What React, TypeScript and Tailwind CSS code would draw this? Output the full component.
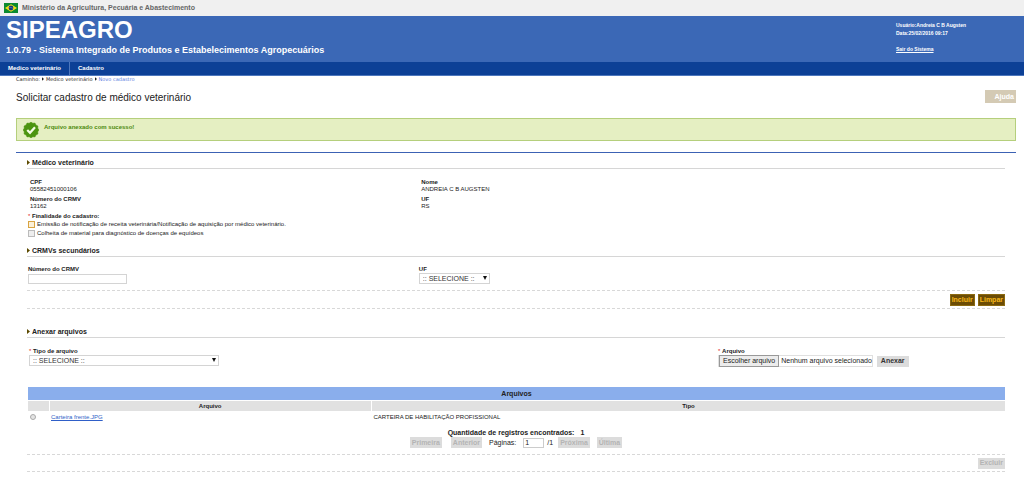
import type { ButtonHTMLAttributes, ReactNode } from "react";

function FlagIcon() {
  return (
    <svg viewBox="0 0 28 20" className="h-[10px] w-[14px] shrink-0" aria-hidden="true">
      <rect width="28" height="20" fill="#0b8a2f" />
      <path d="M14 2.5 26 10 14 17.5 2 10z" fill="#f7e017" />
      <circle cx="14" cy="10" r="4.8" fill="#163a78" />
      <path d="M9.500 9c3-.8 6.500.2 9 2.400" stroke="#9db4e0" strokeWidth="0.8" fill="none" />
    </svg>
  );
}

function SealIcon() {
  const points = Array.from({ length: 24 }, (_, i) => {
    const radius = i % 2 === 0 ? 16 : 14;
    const angle = (i * Math.PI) / 12;
    return `${16 + radius * Math.cos(angle)},${16 + radius * Math.sin(angle)}`;
  }).join(" ");
  return (
    <svg viewBox="0 0 32 32" className="size-4 shrink-0" aria-hidden="true">
      <polygon points={points} fill="#4c9410" stroke="#4c9410" strokeWidth="1" strokeLinejoin="round" />
      <path d="M8.500 16l5.500 5.500L24 10.500" stroke="#f4fbe4" strokeWidth="4.500" fill="none" />
    </svg>
  );
}

function Arrow({ className }: { className: string }) {
  return (
    <svg viewBox="0 0 3 5" className={className} aria-hidden="true">
      <path d="M0 0l3 2.500L0 5z" fill="currentColor" />
    </svg>
  );
}

function SectionTitle({ children }: { children: ReactNode }) {
  return (
    <h2 className="flex h-[12px] items-center gap-[2px] border-b border-[#d6d6d6] text-[7px] leading-[8px] font-bold text-[#222]">
      <Arrow className="h-[5px] w-[3px] text-[#5c4a00]" />
      {children}
    </h2>
  );
}

function Required() {
  return <span className="font-normal text-[#e02020]">* </span>;
}

function Field({ label, value }: { label: string; value: string }) {
  return (
    <div className="h-[17px] pl-[3px]">
      <dt className="font-bold">{label}</dt>
      <dd>{value}</dd>
    </div>
  );
}

function Dropdown({ id, className }: { id: string; className: string }) {
  return (
    <div className={`relative ${className}`}>
      <select
        id={id}
        className="block h-[11px] w-full appearance-none border border-[#d4d4d4] bg-white pl-[3px] text-[7px] leading-[8px] text-[#333]"
      >
        <option>:: SELECIONE ::</option>
      </select>
      <svg viewBox="0 0 4 4" className="pointer-events-none absolute top-[3px] right-[3px] size-[4px]" aria-hidden="true">
        <path d="M0 0h4L2 4z" fill="#111" />
      </svg>
    </div>
  );
}

function GoldButton({ children }: { children: ReactNode }) {
  return (
    <button
      type="button"
      className="h-[12px] border border-[#8c6a10] bg-[#6b4c05] px-px text-[7px] leading-[8px] font-bold text-[#f7b81c]"
    >
      {children}
    </button>
  );
}

function GrayButton({ children, ...rest }: ButtonHTMLAttributes<HTMLButtonElement>) {
  return (
    <button
      type="button"
      {...rest}
      className="h-[11px] bg-[#dcdcdc] px-[4px] text-[7px] leading-[8px] font-bold text-[#333] disabled:px-[2px] disabled:text-[#b4b4b4]"
    >
      {children}
    </button>
  );
}

export default function App() {
  return (
    <div className="bg-white font-['Liberation_Sans',Arial,sans-serif] text-[6px] leading-[7px] text-[#222]">
      <header>
        <div className="flex h-4 items-center gap-[4px] bg-[#f0f0f0] pl-[4px] text-[7px] leading-[8px] font-bold text-[#666]">
          <FlagIcon />
          <span>Ministério da Agricultura, Pecuária e Abastecimento</span>
        </div>
        <div className="flex h-[46px] justify-between bg-[#3b68b6] text-white">
          <div className="pt-[2px] pl-[6px] font-bold">
            <h1 className="text-[24px] leading-[24px]">SIPEAGRO</h1>
            <p className="pt-[3px] text-[9px] leading-[10px]">
              1.0.79 - Sistema Integrado de Produtos e Estabelecimentos Agropecuários
            </p>
          </div>
          <div className="w-[128px] pt-[5px] text-[5px] leading-[8px] font-bold">
            <p>Usuário:Andreia C B Augsten</p>
            <p>Data:25/02/2016 09:17</p>
            <p className="pt-[8px]">
              <a href="#sair" className="underline">Sair do Sistema</a>
            </p>
          </div>
        </div>
        <nav className="flex h-[14px] items-stretch border-b border-[#4d77bd] bg-[#0c4096] text-[6px] font-bold text-white">
          <a href="#medico" className="flex w-[70px] items-center border-r border-[#4d77bd] pl-[8px]">
            Medico veterinário
          </a>
          <a href="#cadastro" className="flex items-center pl-[8px]">Cadastro</a>
        </nav>
      </header>

      <main className="pr-2 pl-4">
        <div className="flex h-[6px] items-center gap-[2px] font-['DejaVu_Sans',Verdana,sans-serif] text-[5px] leading-[6px]">
          <span>Caminho:</span>
          <Arrow className="h-[4px] w-[2px]" />
          <span>Medico veterinário</span>
          <Arrow className="h-[4px] w-[2px]" />
          <span className="text-[#5b7de0]">Novo cadastro</span>
        </div>

        <div className="flex items-center justify-between pt-[8px]">
          <h2 className="pt-[2px] text-[10px] leading-[11px]">Solicitar cadastro de médico veterinário</h2>
          <button
            type="button"
            className="h-[13px] w-[31px] bg-[#d4cab4] pr-[2px] text-right text-[7px] leading-[8px] font-bold text-white"
          >
            Ajuda
          </button>
        </div>

        <div
          role="status"
          className="mt-[15px] flex h-[23px] gap-[5px] border border-[#b5cf7c] bg-[#e5efc2] pt-[3px] pl-[6px] font-bold text-[#4c8a10]"
        >
          <SealIcon />
          <p className="pt-[2px]">Arquivo anexado com sucesso!</p>
        </div>

        <form className="mt-[11px] border-t border-[#3c62b4] px-[11px] pt-[4px]">
          <SectionTitle>Médico veterinário</SectionTitle>
          <dl className="grid grid-cols-[40%_1fr] pt-[10px]">
            <Field label="CPF" value="05582451000106" />
            <Field label="Nome" value="ANDREIA C B AUGSTEN" />
            <Field label="Número do CRMV" value="13162" />
            <Field label="UF" value="RS" />
          </dl>
          <fieldset className="pl-[1px]">
            <legend className="font-bold">
              <Required />
              Finalidade do cadastro:
            </legend>
            <label className="flex h-[9px] items-center gap-[2px]">
              <input
                type="checkbox"
                className="size-[7px] appearance-none border border-[#d9a441] bg-[#fbf0d8] checked:bg-[#d9a441]"
              />
              Emissão de notificação de receita veterinária/Notificação de aquisição por médico veterinário.
            </label>
            <label className="flex h-[9px] items-center gap-[2px]">
              <input
                type="checkbox"
                className="size-[7px] appearance-none border border-[#bbb] bg-[#eee] checked:bg-[#888]"
              />
              Colheita de material para diagnóstico de doenças de equídeos
            </label>
          </fieldset>

          <div className="pt-[7px]">
            <SectionTitle>CRMVs secundários</SectionTitle>
          </div>
          <div className="grid grid-cols-[40%_1fr] pt-[9px] pb-[6px] pl-[1px]">
            <div>
              <label htmlFor="crmv" className="block font-bold">Número do CRMV</label>
              <input id="crmv" type="text" className="mt-[1px] block h-[10px] w-[99px] border border-[#d4d4d4] bg-white px-[2px]" />
            </div>
            <div>
              <label htmlFor="uf" className="block font-bold">UF</label>
              <Dropdown id="uf" className="w-[71px]" />
            </div>
          </div>
          <div className="flex h-[19px] items-center justify-end gap-[3px] border-y border-dashed border-[#d8d8d8]">
            <GoldButton>Incluir</GoldButton>
            <GoldButton>Limpar</GoldButton>
          </div>

          <div className="pt-[17px]">
            <SectionTitle>Anexar arquivos</SectionTitle>
          </div>
          <div className="grid grid-cols-[70.600%_1fr] pt-[10px] pl-[2px]">
            <div>
              <label htmlFor="tipo" className="block font-bold">
                <Required />
                Tipo de arquivo
              </label>
              <Dropdown id="tipo" className="w-[190px]" />
            </div>
            <div>
              <span className="block font-bold">
                <Required />
                Arquivo
              </span>
              <div className="flex items-center gap-[4px] text-[7px] leading-[8px]">
                <label className="flex h-[12px] items-center border border-[#e0e0e0] whitespace-nowrap">
                  <input type="file" aria-label="Arquivo" className="sr-only" />
                  <span className="mr-[2px] flex h-[12px] items-center border border-[#999] bg-[#ececec] px-[3px]">
                    Escolher arquivo
                  </span>
                  Nenhum arquivo selecionado
                </label>
                <GrayButton>Anexar</GrayButton>
              </div>
            </div>
          </div>

          <div className="pt-[20px] pl-[1px]">
            <table className="w-full table-fixed border-collapse">
              <caption className="mb-[1px] h-[13px] bg-[#8aaeec] text-[7px] leading-[13px] font-bold">Arquivos</caption>
              <colgroup>
                <col className="w-[21px]" />
                <col className="w-[33%]" />
                <col />
              </colgroup>
              <thead>
                <tr className="h-[10px] bg-[#e1e1e1] text-center">
                  <th aria-label="Seleção" className="border-r border-white" />
                  <th className="border-r border-white">Arquivo</th>
                  <th>Tipo</th>
                </tr>
              </thead>
              <tbody>
                <tr className="h-[12px]">
                  <td>
                    <input
                      type="radio"
                      name="arquivo"
                      aria-label="Carteira frente.JPG"
                      className="ml-[2px] block size-[6px] appearance-none rounded-full border border-[#aaa] bg-[#e4e4e4] checked:bg-[#555]"
                    />
                  </td>
                  <td className="pl-[2px]">
                    <a href="#carteira" className="text-[#2f5fc8] underline">Carteira frente.JPG</a>
                  </td>
                  <td className="pl-[2px]">CARTEIRA DE HABILITAÇÃO PROFISSIONAL</td>
                </tr>
              </tbody>
            </table>
          </div>

          <p className="pt-[6px] text-center text-[7px] leading-[8px] font-bold">
            Quantidade de registros encontrados:<span className="pl-[6px]">1</span>
          </p>
          <div className="flex items-center justify-center pb-[6px] text-[7px] leading-[8px]">
            <div className="flex gap-[9px]">
              <GrayButton disabled>Primeira</GrayButton>
              <GrayButton disabled>Anterior</GrayButton>
            </div>
            <label htmlFor="pagina" className="px-[7px]">Páginas:</label>
            <input
              id="pagina"
              type="text"
              defaultValue="1"
              className="h-[10px] w-[21px] border border-[#ccc] bg-white px-[1px]"
            />
            <span className="px-[3px]">/1</span>
            <div className="flex gap-[7px] pl-[2px]">
              <GrayButton disabled>Próxima</GrayButton>
              <GrayButton disabled>Última</GrayButton>
            </div>
          </div>
          <div className="flex h-[18px] items-center justify-end border-y border-dashed border-[#d8d8d8]">
            <GrayButton disabled>Excluir</GrayButton>
          </div>
        </form>
      </main>
    </div>
  );
}
